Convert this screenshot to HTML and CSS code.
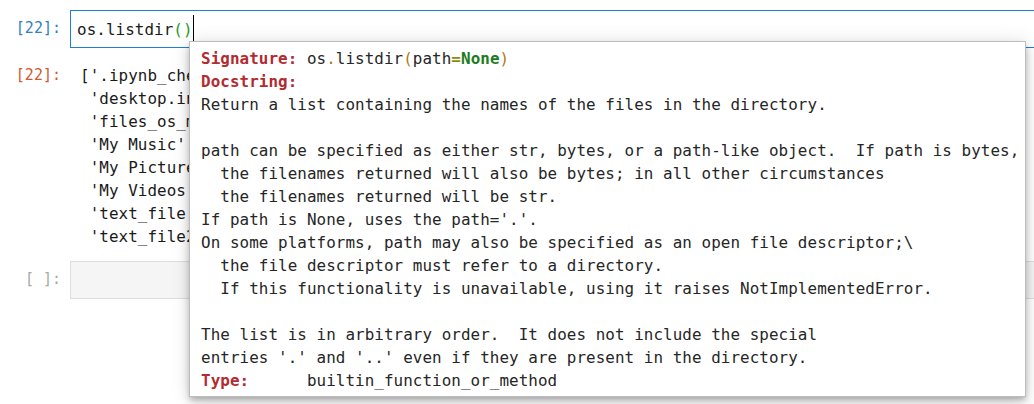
FILE: index.html
```html
<!DOCTYPE html>
<html>
<head>
<meta charset="utf-8">
<link rel="stylesheet" href="styles.css">
</head>
<body>
<div class="notebook">
  <div class="cell">
    <div class="prompt prompt-in">[22]:</div>
    <div class="editor editor-active"><span class="code">os.listdir<span class="bracket">()</span></span><span class="cursor"></span></div>
  </div>
  <div class="cell cell-output">
    <div class="prompt prompt-out">[22]:</div>
    <pre class="output">['.ipynb_checkpoints',
 'desktop.ini',
 'files_os_module.ipynb',
 'My Music',
 'My Pictures',
 'My Videos',
 'text_file.txt',
 'text_file2.txt']</pre>
  </div>
  <div class="cell cell-empty">
    <div class="prompt prompt-dim">[ ]:</div>
    <div class="editor editor-idle"></div>
  </div>

  <div class="tooltip"><pre class="doc"><span class="hdr">Signature:</span> os<span class="punct">.</span>listdir<span class="punct">(</span>path<span class="op">=</span><span class="kw">None</span><span class="punct">)</span>
<span class="hdr">Docstring:</span>
Return a list containing the names of the files in the directory.

path can be specified as either str, bytes, or a path-like object.  If path is bytes,
  the filenames returned will also be bytes; in all other circumstances
  the filenames returned will be str.
If path is None, uses the path='.'.
On some platforms, path may also be specified as an open file descriptor;\
  the file descriptor must refer to a directory.
  If this functionality is unavailable, using it raises NotImplementedError.

The list is in arbitrary order.  It does not include the special
entries '.' and '..' even if they are present in the directory.
<span class="hdr">Type:</span>      builtin_function_or_method</pre></div>
</div>
</body>
</html>
```
FILE: styles.css
```css
html, body {
  margin: 0;
  padding: 0;
  background: #ffffff;
  overflow: hidden;
  width: 1034px;
  height: 404px;
}

.notebook {
  position: relative;
  padding-top: 10px;
  font-family: "DejaVu Sans Mono", "Liberation Mono", monospace;
  font-size: 15.9px;
  line-height: 23px;
  letter-spacing: 0.06px;
  color: #212121;
}

.cell {
  display: flex;
  align-items: flex-start;
}

.prompt {
  flex: 0 0 61px;
  width: 61px;
  margin-right: 9px;
  text-align: right;
  font-size: 15px;
  letter-spacing: 0;
  white-space: pre;
}

.prompt-in {
  color: #307fc1;
  padding-top: 7px;
}

.prompt-out {
  color: #d1582f;
}

.prompt-dim {
  color: #a8a8a8;
  padding-top: 7px;
}

.editor {
  flex: 1;
  height: 23px;
  padding: 7px 6px 6px 6px;
  margin-right: -20px;
  display: flex;
  align-items: center;
}

.editor-active {
  border: 1px solid #1e7fd8;
  background: #ffffff;
}

.editor-idle {
  border: 1px solid #dedede;
  background: #f5f5f5;
}

.code {
  white-space: pre;
  color: #1a1a1a;
}

.bracket {
  color: #1f9a1f;
}

.cursor {
  display: inline-block;
  width: 1px;
  height: 30px;
  background: #000000;
}

.cell-output {
  margin-top: 16px;
}

.output {
  margin: 0;
  padding-left: 10px;
  font: inherit;
  color: #1a1a1a;
  white-space: pre;
}

.cell-empty {
  margin-top: 13px;
}

.tooltip {
  position: absolute;
  left: 189px;
  top: 41px;
  width: 837px;
  height: 356px;
  box-sizing: border-box;
  background: #ffffff;
  border: 1px solid #bdbdbd;
  box-shadow: 0 3px 5px -1px rgba(0,0,0,0.2), 0 6px 10px 0 rgba(0,0,0,0.14), 0 1px 18px 0 rgba(0,0,0,0.12);
  padding: 5px 10px 6px 11px;
  overflow: hidden;
}

.doc {
  margin: 0;
  font: inherit;
  color: #262626;
  white-space: pre;
}

.hdr {
  color: #b22b31;
  font-weight: bold;
}

.punct {
  color: #b3790f;
}

.op {
  color: #8f8a10;
  font-weight: bold;
}

.kw {
  color: #1e7b1e;
  font-weight: bold;
}
```
